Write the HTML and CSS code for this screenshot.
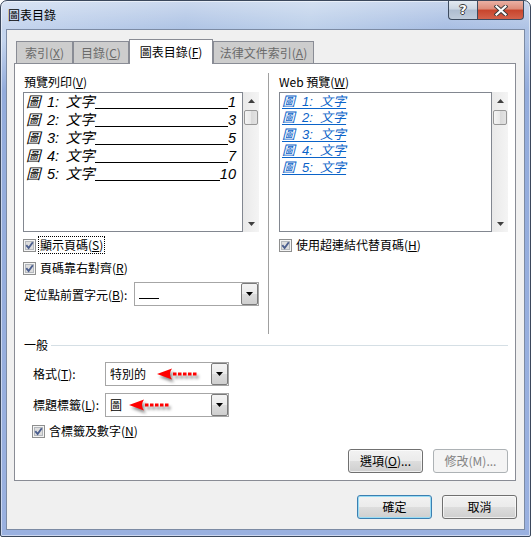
FILE: index.html
```html
<!DOCTYPE html>
<html lang="zh-Hant">
<head>
<meta charset="utf-8">
<title>圖表目錄</title>
<link rel="stylesheet" href="styles.css">
</head>
<body>
<div class="window">
  <div class="titlebar">
    <span class="title">圖表目錄</span>
    <div class="caption-btns">
      <div class="cbtn help"><span class="qmark">?</span></div>
      <div class="cbtn close">
        <svg width="14" height="11" viewBox="0 0 14 11">
          <path d="M2.5 1.5 L11.5 9.5 M11.5 1.5 L2.5 9.5" stroke="#3a3a3a" stroke-width="4" stroke-linecap="square" fill="none"/>
          <path d="M2.5 1.5 L11.5 9.5 M11.5 1.5 L2.5 9.5" stroke="#ffffff" stroke-width="2.2" stroke-linecap="square" fill="none"/>
        </svg>
      </div>
    </div>
  </div>

  <div class="client">
    <div class="tabs">
      <div class="tab t1">索引(<u>X</u>)</div>
      <div class="tab t2">目錄(<u>C</u>)</div>
      <div class="tab t3 active">圖表目錄(<u>F</u>)</div>
      <div class="tab t4">法律文件索引(<u>A</u>)</div>
    </div>

    <div class="panel">
      <div class="top">
        <div class="col left">
          <div class="lbl">預覽列印(<u>V</u>)</div>
          <div class="listwrap">
            <div class="listbox print">
              <div class="prow"><span class="pt">圖 1: 文字</span><span class="leader"></span><span class="pg">1</span></div>
              <div class="prow"><span class="pt">圖 2: 文字</span><span class="leader"></span><span class="pg">3</span></div>
              <div class="prow"><span class="pt">圖 3: 文字</span><span class="leader"></span><span class="pg">5</span></div>
              <div class="prow"><span class="pt">圖 4: 文字</span><span class="leader"></span><span class="pg">7</span></div>
              <div class="prow"><span class="pt">圖 5: 文字</span><span class="leader"></span><span class="pg">10</span></div>
            </div>
            <div class="vscroll">
              <div class="sb-arrow"><svg width="7" height="4" viewBox="0 0 7 4"><path d="M0 4 L3.5 0 L7 4 Z" fill="#404040"/></svg></div>
              <div class="thumb"></div>
              <div class="track"></div>
              <div class="sb-arrow"><svg width="7" height="4" viewBox="0 0 7 4"><path d="M0 0 L3.5 4 L7 0 Z" fill="#404040"/></svg></div>
            </div>
          </div>
          <div class="chk first">
            <svg class="cb" width="13" height="13" viewBox="0 0 13 13"><rect x="0.5" y="0.5" width="12" height="12" fill="#f4f4f4" stroke="#8e8f8f"/><rect x="2.5" y="2.5" width="8" height="8" fill="#dedede" stroke="#b4b8bd"/><path d="M3.3 6.2 L5.6 9 L9.8 3.3" fill="none" stroke="#4b5e8e" stroke-width="1.9"/></svg>
            <span class="clabel focus">顯示頁碼(<u>S</u>)</span>
          </div>
          <div class="chk">
            <svg class="cb" width="13" height="13" viewBox="0 0 13 13"><rect x="0.5" y="0.5" width="12" height="12" fill="#f4f4f4" stroke="#8e8f8f"/><rect x="2.5" y="2.5" width="8" height="8" fill="#dedede" stroke="#b4b8bd"/><path d="M3.3 6.2 L5.6 9 L9.8 3.3" fill="none" stroke="#4b5e8e" stroke-width="1.9"/></svg>
            <span class="clabel">頁碼靠右對齊(<u>R</u>)</span>
          </div>
          <div class="lrow">
            <span>定位點前置字元(<u>B</u>):</span>
            <div class="combo small">
              <div class="cval"><span class="uline"></span></div>
              <div class="dd"><svg width="7" height="4" viewBox="0 0 7 4"><path d="M0 0 L3.5 4 L7 0 Z" fill="#000"/></svg></div>
            </div>
          </div>
        </div>

        <div class="vsep"></div>

        <div class="col right">
          <div class="lbl">Web 預覽(<u>W</u>)</div>
          <div class="listwrap">
            <div class="listbox web">
              <div class="wrow">圖 1: 文字</div>
              <div class="wrow">圖 2: 文字</div>
              <div class="wrow">圖 3: 文字</div>
              <div class="wrow">圖 4: 文字</div>
              <div class="wrow">圖 5: 文字</div>
            </div>
            <div class="vscroll">
              <div class="sb-arrow"><svg width="7" height="4" viewBox="0 0 7 4"><path d="M0 4 L3.5 0 L7 4 Z" fill="#404040"/></svg></div>
              <div class="thumb"></div>
              <div class="track"></div>
              <div class="sb-arrow"><svg width="7" height="4" viewBox="0 0 7 4"><path d="M0 0 L3.5 4 L7 0 Z" fill="#404040"/></svg></div>
            </div>
          </div>
          <div class="chk first">
            <svg class="cb" width="13" height="13" viewBox="0 0 13 13"><rect x="0.5" y="0.5" width="12" height="12" fill="#f4f4f4" stroke="#8e8f8f"/><rect x="2.5" y="2.5" width="8" height="8" fill="#dedede" stroke="#b4b8bd"/><path d="M3.3 6.2 L5.6 9 L9.8 3.3" fill="none" stroke="#4b5e8e" stroke-width="1.9"/></svg>
            <span class="clabel">使用超連結代替頁碼(<u>H</u>)</span>
          </div>
        </div>
      </div>

      <div class="ghead"><span>一般</span><div class="gline"></div></div>

      <div class="frow r1">
        <span class="flabel">格式(<u>T</u>):</span>
        <div class="combo wide">
          <div class="cval">特別的<svg class="redarrow a1" width="42" height="14" viewBox="0 0 42 14"><path d="M0 7 L15 1.5 Q11 7 15 12.5 Z" fill="#f00"/><line x1="16" y1="7" x2="41" y2="7" stroke="#f00" stroke-width="3" stroke-dasharray="3.5 1.5"/></svg></div>
          <div class="dd"><svg width="7" height="4" viewBox="0 0 7 4"><path d="M0 0 L3.5 4 L7 0 Z" fill="#000"/></svg></div>
        </div>
      </div>

      <div class="frow r2">
        <span class="flabel">標題標籤(<u>L</u>):</span>
        <div class="combo wide">
          <div class="cval">圖<svg class="redarrow a2" width="42" height="14" viewBox="0 0 42 14"><path d="M0 7 L15 1.5 Q11 7 15 12.5 Z" fill="#f00"/><line x1="16" y1="7" x2="41" y2="7" stroke="#f00" stroke-width="3" stroke-dasharray="3.5 1.5"/></svg></div>
          <div class="dd"><svg width="7" height="4" viewBox="0 0 7 4"><path d="M0 0 L3.5 4 L7 0 Z" fill="#000"/></svg></div>
        </div>
      </div>

      <div class="chk grp">
        <svg class="cb" width="13" height="13" viewBox="0 0 13 13"><rect x="0.5" y="0.5" width="12" height="12" fill="#f4f4f4" stroke="#8e8f8f"/><rect x="2.5" y="2.5" width="8" height="8" fill="#dedede" stroke="#b4b8bd"/><path d="M3.3 6.2 L5.6 9 L9.8 3.3" fill="none" stroke="#4b5e8e" stroke-width="1.9"/></svg>
        <span class="clabel">含標籤及數字(<u>N</u>)</span>
      </div>

      <div class="panel-btns">
        <div class="btn">選項(<u>O</u>)...</div>
        <div class="btn disabled">修改(M)...</div>
      </div>
    </div>

    <div class="dlg-btns">
      <div class="btn default">確定</div>
      <div class="btn">取消</div>
    </div>
  </div>
</div>
</body>
</html>
```

FILE: styles.css
```css
* { box-sizing: border-box; }
html, body { margin: 0; padding: 0; }
body {
  width: 531px;
  height: 537px;
  overflow: hidden;
  background: #ffffff;
  font-family: "Noto Sans CJK TC", "Noto Sans", sans-serif;
  font-size: 12px;
  color: #000;
}
u { text-decoration: underline; text-underline-offset: 1px; }

/* ---------- window frame ---------- */
.window {
  width: 531px;
  height: 537px;
  border: 1px solid #3b485c;
  border-radius: 7px 7px 2px 2px;
  padding: 0 5px 6px 5px;
  display: flex;
  flex-direction: column;
  background:
    linear-gradient(to bottom, rgba(255,255,255,0.35) 0, rgba(255,255,255,0) 28px),
    linear-gradient(to bottom, rgba(148,172,220,0) 0, rgba(148,172,220,0) 40px, #93acdc 90px, #9ab1e0 100%),
    linear-gradient(100deg, #c6d6ee 0%, #afc4e5 30%, #bdd0ea 50%, #a8bee3 72%, #b6c9e8 100%);
  box-shadow: inset 0 0 0 1px rgba(255,255,255,0.5);
}

.titlebar {
  height: 28px;
  display: flex;
  justify-content: space-between;
  align-items: flex-start;
  padding: 0 1px 0 2px;
}
.title {
  margin-top: 6px;
  line-height: 16px;
  font-size: 12px;
  color: #000;
}
.caption-btns { display: flex; }
.cbtn {
  height: 19px;
  border: 1px solid #3d4b5f;
  border-top: none;
  display: flex;
  align-items: center;
  justify-content: center;
}
.help {
  width: 29px;
  border-right: none;
  border-radius: 0 0 0 4px;
  background: linear-gradient(to bottom, #e3e9f1 0%, #cbd5e2 45%, #aebdd0 50%, #bfcbdb 100%);
}
.qmark {
  font-family: "DejaVu Sans", sans-serif;
  font-weight: bold;
  font-size: 13px;
  line-height: 14px;
  color: #fff;
  text-shadow: 1px 0 0 #3a3a3a, -1px 0 0 #3a3a3a, 0 1px 0 #3a3a3a, 0 -1px 0 #3a3a3a;
}
.close {
  width: 47px;
  border-radius: 0 0 4px 0;
  background: linear-gradient(to bottom, #eab0a4 0%, #dc8b78 45%, #c8442c 50%, #d4624b 100%);
}

/* ---------- client area ---------- */
.client {
  flex: 1;
  border: 1px solid #7c8ba4;
  background: #f0f0f0;
  display: flex;
  flex-direction: column;
  padding: 9px 8px 0 7px;
}

.tabs {
  display: flex;
  align-items: flex-end;
  height: 24px;
  padding-left: 2px;
}
.tab {
  height: 22px;
  border: 1px solid #898c95;
  border-bottom: none;
  background: #cdcdcd;
  color: #6a6a6a;
  display: flex;
  align-items: center;
  justify-content: center;
  line-height: 16px;
}
.t1 { width: 57px; }
.t2 { width: 56px; }
.t3 { width: 84px; }
.t4 { width: 101px; }
.tab.active {
  height: 25px;
  margin-bottom: -1px;
  background: #fff;
  color: #000;
  position: relative;
  z-index: 1;
}

.panel {
  height: 418px;
  border: 1px solid #898c95;
  background: #fff;
  padding: 10px 7px 7px 8px;
  display: flex;
  flex-direction: column;
}

.top { display: flex; height: 260px; }
.col.left { width: 236px; }
.col.right { width: 229px; }
.vsep {
  width: 1px;
  background: #a0a0a0;
  margin: -1px 10px 0 9px;
}
.lbl {
  height: 16px;
  line-height: 16px;
  margin-bottom: 2px;
  padding-left: 1px;
}
.col.right .lbl { padding-left: 0; }

.listwrap { display: flex; height: 140px; }
.listbox {
  border: 1px solid #828790;
  background: #fff;
  overflow: hidden;
}
.listbox.print { width: 220px; padding: 0 6px 0 2px; }
.listbox.web { width: 213px; padding: 1px 0 0 2px; }

.prow {
  display: flex;
  height: 18px;
  line-height: 18px;
  white-space: pre;
  font-family: "Liberation Sans", "Noto Sans CJK TC", sans-serif;
  font-style: italic;
  font-size: 14.5px;
  word-spacing: 2.5px;
}
.leader {
  flex: 1;
  border-bottom: 1px solid #000;
  margin-bottom: 2px;
}

.wrow {
  height: 16.4px;
  line-height: 16.4px;
  white-space: pre;
  font-family: "Liberation Sans", "Noto Sans CJK TC", sans-serif;
  font-style: italic;
  font-size: 13px;
  word-spacing: 3.5px;
  color: #0b63c8;
  text-decoration: underline;
  text-underline-offset: 2px;
}

.vscroll {
  width: 16px;
  display: flex;
  flex-direction: column;
  background: linear-gradient(to right, #e9e9e9, #f4f4f4);
}
.sb-arrow {
  height: 17px;
  display: flex;
  align-items: center;
  justify-content: center;
}
.thumb {
  height: 15px;
  margin: 1px 1px 0 1px;
  border: 1px solid #979797;
  border-radius: 2px;
  background: linear-gradient(to right, #f4f4f4 0%, #e8e8e8 50%, #d9d9d9 51%, #e3e3e3 100%);
}
.track { flex: 1; }

/* checkboxes */
.chk {
  display: flex;
  align-items: center;
  height: 18px;
  gap: 2px;
  margin-top: 5px;
}
.chk.first { margin-top: 4px; }
.cb { flex: none; display: block; }
.clabel {
  border: 1px dotted transparent;
  padding: 0 1px;
  line-height: 16px;
}
.clabel.focus { border-color: #000; }

.lrow {
  display: flex;
  align-items: center;
  justify-content: space-between;
  height: 24px;
  margin-top: 5px;
  padding-left: 1px;
}

/* combos */
.combo {
  display: flex;
  height: 24px;
  border: 1px solid #a6a6a6;
  background: #fff;
}
.combo.small { width: 125px; }
.combo.wide { width: 124px; }
.cval {
  flex: 1;
  display: flex;
  align-items: center;
  padding-left: 4px;
  line-height: 16px;
}
.uline {
  width: 20px;
  height: 9px;
  border-bottom: 1px solid #000;
}
.dd {
  width: 17px;
  border: 1px solid #7a7a7a;
  border-radius: 2px;
  background: linear-gradient(to bottom, #f4f4f4 0%, #ebebeb 50%, #dcdcdc 51%, #cfcfcf 100%);
  display: flex;
  align-items: center;
  justify-content: center;
}
.redarrow {
  flex: none;
  filter: drop-shadow(2px 3px 1.5px rgba(0,0,0,0.45));
}
.a1 { margin-left: 11px; }
.a2 { margin-left: 7px; }

/* group */
.ghead {
  display: flex;
  align-items: center;
  height: 16px;
  margin-top: 3px;
  padding-left: 1px;
  line-height: 16px;
}
.gline {
  flex: 1;
  height: 1px;
  background: #d5dfe5;
  margin-left: 3px;
}
.frow {
  display: flex;
  align-items: center;
  height: 24px;
  padding-left: 10px;
}
.r1 { margin-top: 9px; }
.r2 { margin-top: 7px; }
.flabel { width: 72px; line-height: 16px; }
.chk.grp { padding-left: 9px; margin-top: 5px; }

/* buttons */
.panel-btns {
  display: flex;
  justify-content: flex-end;
  gap: 10px;
  margin-top: 9px;
}
.dlg-btns {
  display: flex;
  justify-content: flex-end;
  gap: 10px;
  margin-top: 14px;
  margin-right: -1px;
}
.btn {
  width: 75px;
  height: 24px;
  border: 1px solid #707070;
  border-radius: 3px;
  background: linear-gradient(to bottom, #f2f2f2 0%, #ebebeb 50%, #dddddd 51%, #cfcfcf 100%);
  box-shadow: inset 0 0 0 1px rgba(255,255,255,0.65);
  display: flex;
  align-items: center;
  justify-content: center;
  line-height: 16px;
}
.btn.default {
  border-color: #3c7fb1;
  box-shadow: inset 0 0 0 1px #98dcf5;
}
.btn.disabled {
  border-color: #adb2b5;
  background: #f4f4f4;
  box-shadow: none;
  color: #838383;
}
```
